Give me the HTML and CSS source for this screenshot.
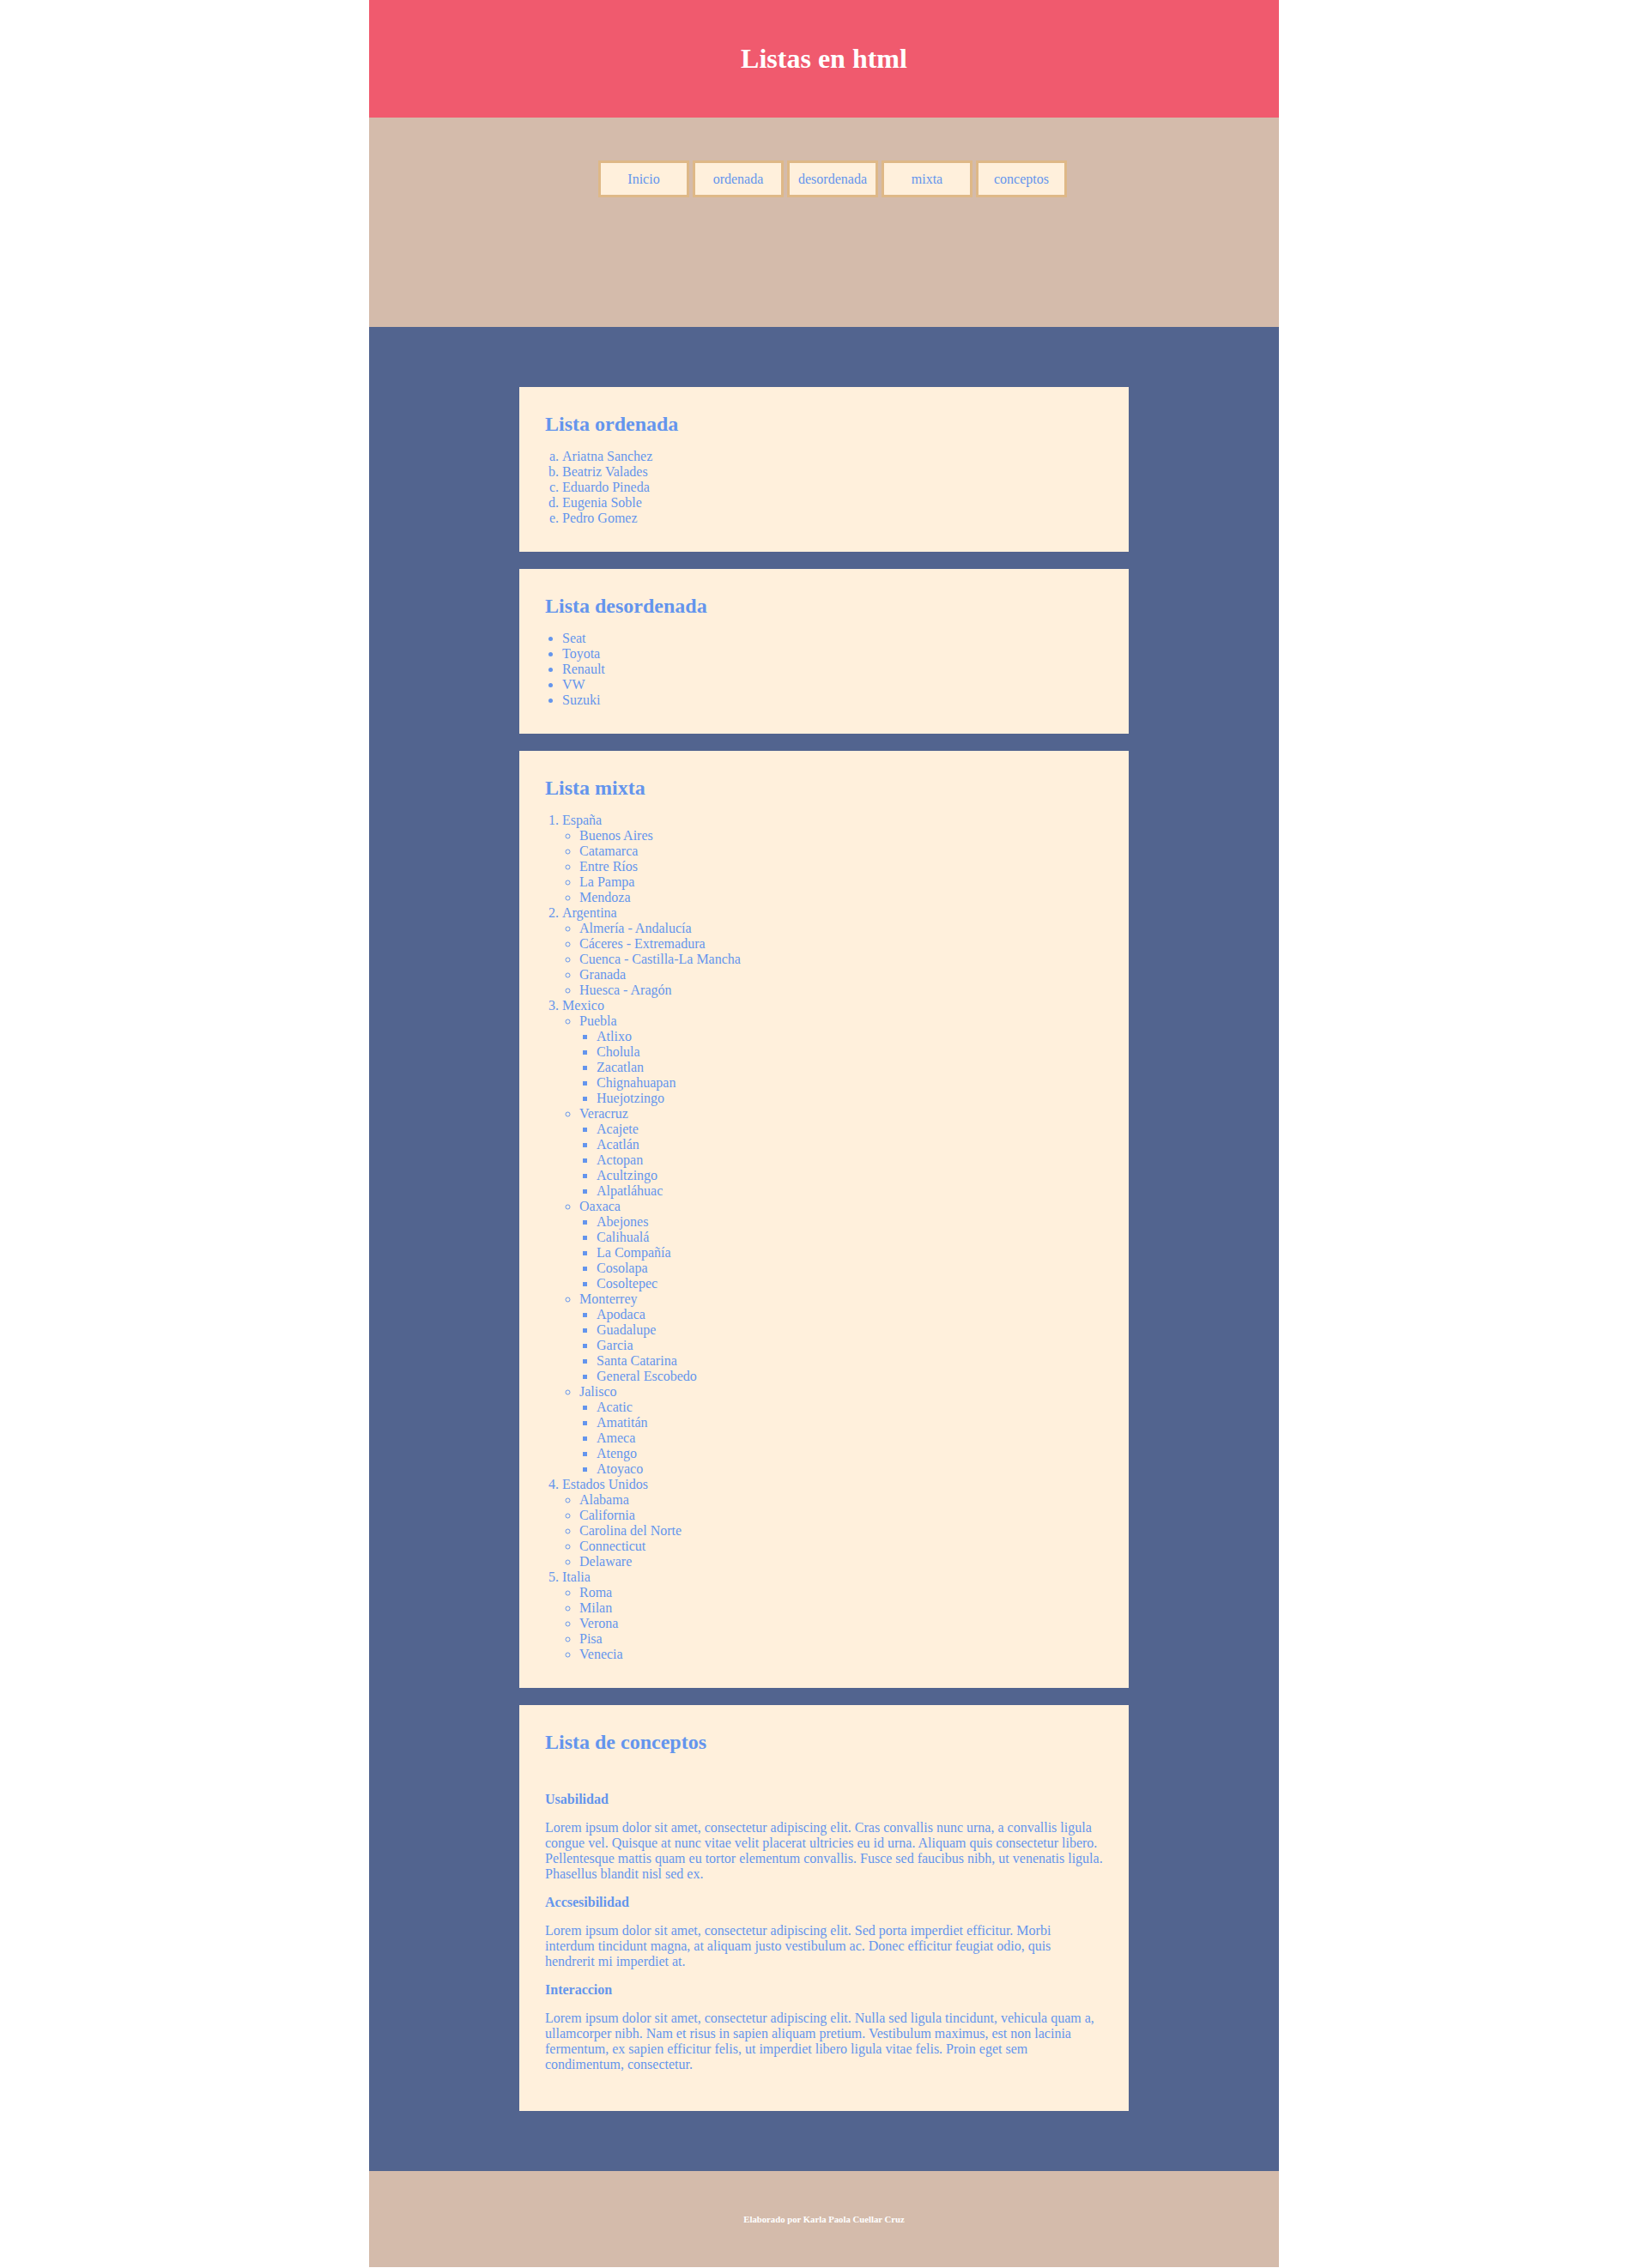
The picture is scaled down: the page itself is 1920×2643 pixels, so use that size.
FILE: index.html
```html
<!DOCTYPE html>
<html lang="es">
<head>
<meta charset="utf-8">
<title>Listas en html</title>
<link rel="stylesheet" href="styles.css">
</head>
<body>
<div class="page">
  <header class="site-header">
    <h1 class="site-title">Listas en html</h1>
  </header>
  <nav class="site-nav">
    <ul class="nav-list">
      <li class="nav-item">Inicio</li>
      <li class="nav-item">ordenada</li>
      <li class="nav-item">desordenada</li>
      <li class="nav-item">mixta</li>
      <li class="nav-item">conceptos</li>
    </ul>
  </nav>
  <main class="site-main">
    <section class="card">
      <h2 class="card-title">Lista ordenada</h2>
      <ol class="list alpha">
        <li>Ariatna Sanchez</li>
        <li>Beatriz Valades</li>
        <li>Eduardo Pineda</li>
        <li>Eugenia Soble</li>
        <li>Pedro Gomez</li>
      </ol>
    </section>
    <section class="card">
      <h2 class="card-title">Lista desordenada</h2>
      <ul class="list">
        <li>Seat</li>
        <li>Toyota</li>
        <li>Renault</li>
        <li>VW</li>
        <li>Suzuki</li>
      </ul>
    </section>
    <section class="card">
      <h2 class="card-title">Lista mixta</h2>
      <ol class="list">
        <li>España
          <ul class="list">
            <li>Buenos Aires</li>
            <li>Catamarca</li>
            <li>Entre Ríos</li>
            <li>La Pampa</li>
            <li>Mendoza</li>
          </ul>
        </li>
        <li>Argentina
          <ul class="list">
            <li>Almería - Andalucía</li>
            <li>Cáceres - Extremadura</li>
            <li>Cuenca - Castilla-La Mancha</li>
            <li>Granada</li>
            <li>Huesca - Aragón</li>
          </ul>
        </li>
        <li>Mexico
          <ul class="list">
            <li>Puebla
              <ul class="list">
                <li>Atlixo</li>
                <li>Cholula</li>
                <li>Zacatlan</li>
                <li>Chignahuapan</li>
                <li>Huejotzingo</li>
              </ul>
            </li>
            <li>Veracruz
              <ul class="list">
                <li>Acajete</li>
                <li>Acatlán</li>
                <li>Actopan</li>
                <li>Acultzingo</li>
                <li>Alpatláhuac</li>
              </ul>
            </li>
            <li>Oaxaca
              <ul class="list">
                <li>Abejones</li>
                <li>Calihualá</li>
                <li>La Compañía</li>
                <li>Cosolapa</li>
                <li>Cosoltepec</li>
              </ul>
            </li>
            <li>Monterrey
              <ul class="list">
                <li>Apodaca</li>
                <li>Guadalupe</li>
                <li>Garcia</li>
                <li>Santa Catarina</li>
                <li>General Escobedo</li>
              </ul>
            </li>
            <li>Jalisco
              <ul class="list">
                <li>Acatic</li>
                <li>Amatitán</li>
                <li>Ameca</li>
                <li>Atengo</li>
                <li>Atoyaco</li>
              </ul>
            </li>
          </ul>
        </li>
        <li>Estados Unidos
          <ul class="list">
            <li>Alabama</li>
            <li>California</li>
            <li>Carolina del Norte</li>
            <li>Connecticut</li>
            <li>Delaware</li>
          </ul>
        </li>
        <li>Italia
          <ul class="list">
            <li>Roma</li>
            <li>Milan</li>
            <li>Verona</li>
            <li>Pisa</li>
            <li>Venecia</li>
          </ul>
        </li>
      </ol>
    </section>
    <section class="card">
      <h2 class="card-title">Lista de conceptos</h2>
      <dl class="concepts">
        <dt class="concept-term">Usabilidad</dt>
        <dd class="concept-desc"><p class="concept-text">Lorem ipsum dolor sit amet, consectetur adipiscing elit. Cras convallis nunc urna, a convallis ligula congue vel. Quisque at nunc vitae velit placerat ultricies eu id urna. Aliquam quis consectetur libero. Pellentesque mattis quam eu tortor elementum convallis. Fusce sed faucibus nibh, ut venenatis ligula. Phasellus blandit nisl sed ex.</p></dd>
        <dt class="concept-term">Accsesibilidad</dt>
        <dd class="concept-desc"><p class="concept-text">Lorem ipsum dolor sit amet, consectetur adipiscing elit. Sed porta imperdiet efficitur. Morbi interdum tincidunt magna, at aliquam justo vestibulum ac. Donec efficitur feugiat odio, quis hendrerit mi imperdiet at.</p></dd>
        <dt class="concept-term">Interaccion</dt>
        <dd class="concept-desc"><p class="concept-text">Lorem ipsum dolor sit amet, consectetur adipiscing elit. Nulla sed ligula tincidunt, vehicula quam a, ullamcorper nibh. Nam et risus in sapien aliquam pretium. Vestibulum maximus, est non lacinia fermentum, ex sapien efficitur felis, ut imperdiet libero ligula vitae felis. Proin eget sem condimentum, consectetur.</p></dd>
      </dl>
    </section>
  </main>
  <footer class="site-footer">
    <h6 class="footer-text">Elaborado por Karla Paola Cuellar Cruz</h6>
  </footer>
</div>
</body>
</html>
```

FILE: styles.css
```css
html, body {
  margin: 0;
  padding: 0;
  background: #ffffff;
}

body {
  font-family: "Liberation Serif", "Times New Roman", serif;
  font-size: 16px;
  color: #6495ed;
}

.page {
  width: 1060px;
  margin: 0 auto;
}

.site-header {
  background: #f05a6e;
  padding: 50px 0;
  text-align: center;
}

.site-title {
  margin: 0;
  font-size: 32px;
  font-weight: bold;
  color: #ffffff;
}

.site-nav {
  background: #d4bbab;
  height: 244px;
  box-sizing: border-box;
  padding-top: 50px;
}

.nav-list {
  list-style: none;
  margin: 0;
  padding: 0 0 0 20px;
  display: flex;
  justify-content: center;
  gap: 4px;
}

.nav-item {
  width: 100px;
  height: 37px;
  border: 3px solid #deb887;
  background: #fff0dc;
  color: #6495ed;
  display: flex;
  align-items: center;
  justify-content: center;
  font-size: 16px;
}

.site-main {
  background: #52648f;
  padding: 70px 0;
  display: flex;
  flex-direction: column;
  align-items: center;
  gap: 20px;
}

.card {
  width: 710px;
  box-sizing: border-box;
  padding: 30px;
  background: #fff0dc;
}

.card-title {
  margin: 0 0 16px;
  font-size: 24px;
  line-height: 26px;
  font-weight: bold;
  color: #6495ed;
}

.list {
  margin: 0;
  padding-left: 20px;
  line-height: 18px;
}

.alpha {
  list-style-type: lower-alpha;
}

.concepts {
  margin: 45px 0 0;
  line-height: 18px;
}

.concept-term {
  font-weight: bold;
  margin: 0;
}

.concept-desc {
  margin: 0;
}

.concept-text {
  margin: 15px 0;
}

.site-footer {
  background: #d4bbab;
  padding: 50px 0;
  text-align: center;
}

.footer-text {
  margin: 0;
  font-size: 10.72px;
  font-weight: bold;
  color: #ffffff;
}
```
